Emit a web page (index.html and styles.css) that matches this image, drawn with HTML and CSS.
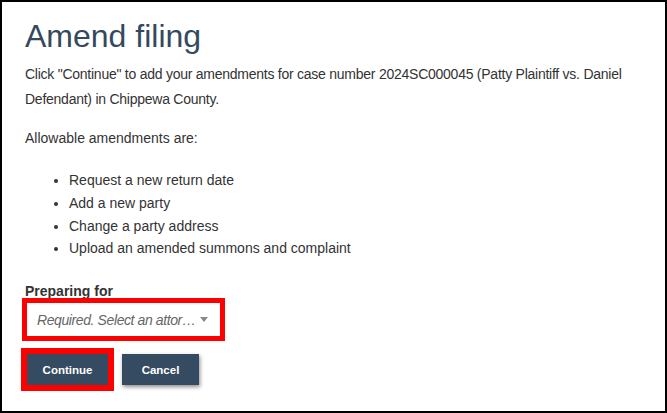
FILE: index.html
```html
<!DOCTYPE html>
<html lang="en">
<head>
    <meta charset="UTF-8">
    <meta name="viewport" content="width=device-width, initial-scale=1.0">
    <title>Amend filing</title>
    <link rel="stylesheet" href="styles.css">
</head>
<body>
    <div class="page">
        <h1 class="page-title">Amend filing</h1>
        <p class="intro">Click "Continue" to add your amendments for case number 2024SC000045 (Patty Plaintiff vs. Daniel Defendant) in Chippewa County.</p>
        <p>Allowable amendments are:</p>
        <ul class="amend-list">
            <li>Request a new return date</li>
            <li>Add a new party</li>
            <li>Change a party address</li>
            <li>Upload an amended summons and complaint</li>
        </ul>

        <label class="field-label">Preparing for</label>
        <div class="select-box highlight">
            <span class="select-text">Required. Select an attorney or party</span>
            <span class="select-arrow"></span>
        </div>

        <div class="actions">
            <button class="btn btn-continue highlight">Continue</button>
            <button class="btn btn-cancel">Cancel</button>
        </div>
    </div>
</body>
</html>
```

FILE: styles.css
```css
* {
    box-sizing: border-box;
}

body {
    margin: 0;
    padding: 0;
    font-family: 'Liberation Sans', Arial, sans-serif;
    font-size: 14px;
    color: #333;
    background: #fff;
}

.page {
    width: 667px;
    height: 413px;
    border: 2px solid #000;
    padding: 14px 10px 0 23px;
}

.page-title {
    margin: 0 0 6px;
    font-size: 32px;
    font-weight: normal;
    line-height: 40px;
    color: #34495e;
}

p {
    margin: 0 0 14px;
    line-height: 25px;
}

.intro {
    letter-spacing: -0.25px;
}

.amend-list {
    margin: 18px 0 0;
    padding-left: 44px;
    line-height: 22.8px;
}

.field-label {
    display: block;
    margin-top: 22px;
    font-weight: bold;
    line-height: 18px;
}

.highlight {
    outline: 6px solid #f00;
}

.select-box {
    display: flex;
    align-items: center;
    width: 193px;
    height: 33px;
    margin: 3px 0 0 2px;
    padding: 0 12px 0 10px;
    background: #fff;
}

.select-box.highlight {
    outline-width: 5px;
}

.select-text {
    flex: 1;
    overflow: hidden;
    white-space: nowrap;
    text-overflow: ellipsis;
    font-style: italic;
    letter-spacing: -0.4px;
    color: #666;
}

.select-arrow {
    width: 0;
    height: 0;
    border-left: 4px solid transparent;
    border-right: 4px solid transparent;
    border-top: 5px solid #888;
}

.actions {
    display: flex;
    gap: 14px;
    margin: 18px 0 0 2px;
}

.btn {
    height: 31px;
    padding: 0;
    border: none;
    border-radius: 0;
    background: #344b62;
    color: #fff;
    font-family: 'Liberation Sans', Arial, sans-serif;
    font-size: 11.5px;
    font-weight: bold;
    cursor: pointer;
}

.btn-continue {
    width: 81px;
}

.btn-cancel {
    width: 77px;
    box-shadow: 1px 2px 4px rgba(0, 0, 0, 0.45);
}
```
